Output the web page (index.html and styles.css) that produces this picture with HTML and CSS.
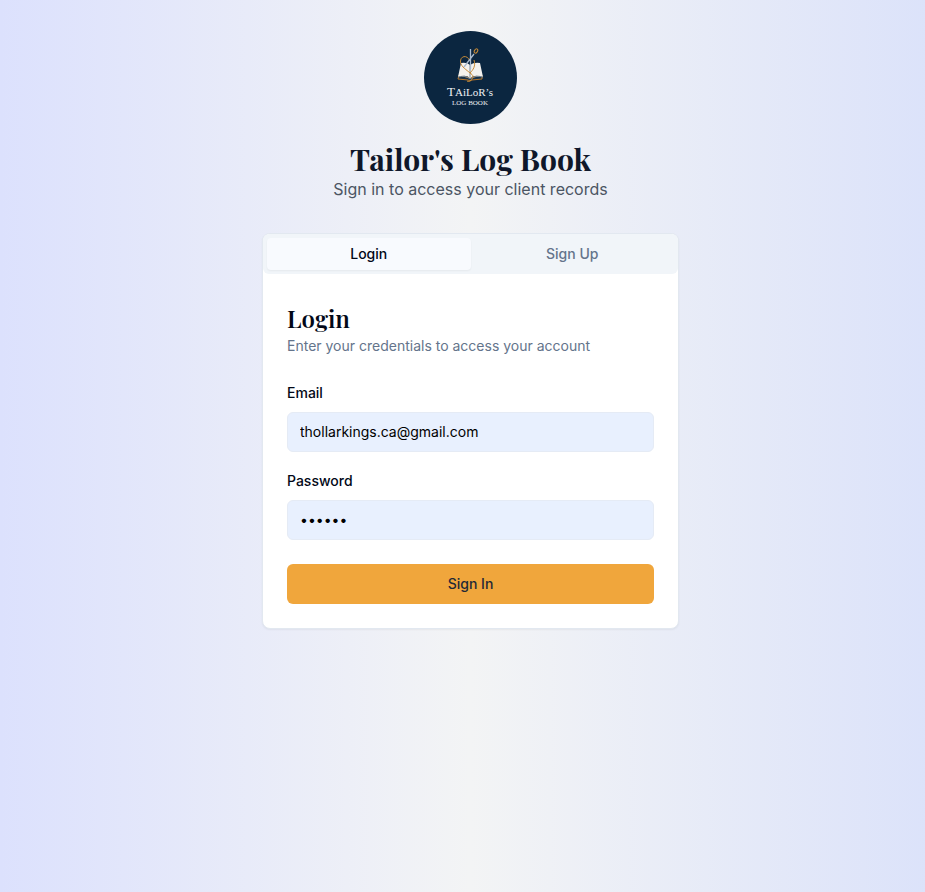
FILE: index.html
```html
<!DOCTYPE html>
<html lang="en">
<head>
  <meta charset="utf-8">
  <meta name="viewport" content="width=device-width, initial-scale=1">
  <title>Tailor's Log Book</title>
  <link rel="stylesheet" href="styles.css">
</head>
<body>
  <main class="page">
    <header class="brand">
      <svg class="logo" viewBox="0 0 93 93" role="img" aria-label="Tailor's Log Book">
        <circle cx="46.500" cy="46.500" r="46.500" fill="#0b2640"/>
        <path d="M35 44 46 47 58 44 58 48 48 49 46 50 44 49 34 48Z" fill="#17324a" stroke="#b9782c" stroke-width="1"/>
        <path d="M37 32Q43 31 46 34Q50 31 56 32L59 46Q51 43 46 47Q42 43 34 46Z" fill="#f4f2ee"/>
        <path d="M46 34V46M34 46Q42 44 46 48Q51 44 59 46" fill="none" stroke="#7d8b98" stroke-width="1"/>
        <path d="M46 30C43 23 36 25 36.500 31C37 36 43 39 46 42C49 39 52 35 50 29M46 42C49 44 51 46 46 50Q44 51 43 50" fill="none" stroke="#c88b36" stroke-width="1"/>
        <path d="M46.500 18V38M40 36 50 23" fill="none" stroke="#a9b9cc" stroke-width="1.300"/>
        <ellipse cx="52" cy="20" rx="1.500" ry="2.300" transform="rotate(35 52 20)" fill="none" stroke="#c88b36" stroke-width="1"/>
        <text class="logo-name" x="46" y="65" text-anchor="middle"><tspan class="logo-cap">T</tspan>AiLoR’s</text>
        <text class="logo-sub" x="46" y="74" text-anchor="middle">LOG BOOK</text>
      </svg>
      <h1 class="title">Tailor's Log Book</h1>
      <p class="subtitle">Sign in to access your client records</p>
    </header>

    <section class="card">
      <div class="tabs" role="tablist">
        <button class="tab tab-active" type="button" role="tab" aria-selected="true">Login</button>
        <button class="tab" type="button" role="tab" aria-selected="false">Sign Up</button>
      </div>
      <form class="form">
        <div class="heading">
          <h2 class="form-title">Login</h2>
          <p class="hint">Enter your credentials to access your account</p>
        </div>
        <div class="field">
          <label for="email">Email</label>
          <input id="email" type="email" value="thollarkings.ca@gmail.com">
        </div>
        <div class="field">
          <label for="password">Password</label>
          <input id="password" type="password" value="abcdef">
        </div>
        <button class="submit" type="submit">Sign In</button>
      </form>
    </section>
  </main>
</body>
</html>
```
FILE: styles.css
```css
* {
  box-sizing: border-box;
}

body {
  margin: 0;
  min-height: 100vh;
  font-family: Inter, sans-serif;
  font-size: 14px;
  line-height: 20px;
  color: #020817;
  background: linear-gradient(to right, #dce1fd, #f3f4f5, #dbe2fa) 0 0 / calc(100% + 16px) 100%;
}

h1,
h2,
p {
  margin: 0;
}

.page {
  display: flex;
  flex-direction: column;
  align-items: center;
  gap: 32px;
  padding: 31px 16px 32px 32px;
}

.brand {
  display: flex;
  flex-direction: column;
  align-items: center;
  text-align: center;
}

.logo {
  width: 93px;
  height: 93px;
  margin-bottom: 17px;
}

.logo text {
  font-family: "Liberation Serif", serif;
  fill: #eef1f4;
}

.logo-name {
  font-size: 11px;
}

.logo-cap {
  font-size: 13px;
}

.logo-sub {
  font-size: 7px;
}

.title {
  font-family: "Playfair Display", "Liberation Serif", serif;
  font-size: 30px;
  line-height: 36px;
  font-weight: 700;
  color: #0f172a;
}

.subtitle {
  font-size: 16px;
  line-height: 24px;
  color: #4b5563;
}

.card {
  width: 100%;
  max-width: 417px;
  background: #fff;
  border: 1px solid #e2e8f0;
  border-radius: 8px;
  box-shadow: 0 1px 2px rgba(0, 0, 0, 0.05);
}

.tabs {
  display: grid;
  grid-template-columns: 1fr 1fr;
  height: 40px;
  padding: 4px;
  background: #f1f5f9;
  border-radius: 6px;
}

.tab,
.submit {
  border: 0;
  font: inherit;
  font-weight: 500;
  cursor: pointer;
}

.tab {
  padding: 0;
  border-radius: 4px;
  background: transparent;
  color: #64748b;
}

.tab-active {
  background: #f8fafe;
  color: #020817;
  box-shadow: 0 1px 2px rgba(0, 0, 0, 0.05);
}

.form {
  display: flex;
  flex-direction: column;
  padding: 32px 24px 24px;
}

.heading {
  display: flex;
  flex-direction: column;
  gap: 6px;
  margin-bottom: 26px;
}

.form-title {
  font-family: "Playfair Display", "Liberation Serif", serif;
  font-size: 24px;
  line-height: 24px;
  font-weight: 600;
}

.hint {
  color: #64748b;
}

.field {
  display: flex;
  flex-direction: column;
  gap: 8px;
  margin-bottom: 18px;
}

.field label {
  line-height: 22px;
  font-weight: 500;
}

.field input {
  width: 100%;
  height: 40px;
  padding: 0 12px 2px;
  border: 1px solid #e5ebf5;
  border-radius: 6px;
  background: #e8f0fe;
  font: inherit;
  color: #000;
}

.submit {
  height: 40px;
  margin-top: 6px;
  border-radius: 6px;
  background: #f0a63c;
  color: #1f2937;
}
```
